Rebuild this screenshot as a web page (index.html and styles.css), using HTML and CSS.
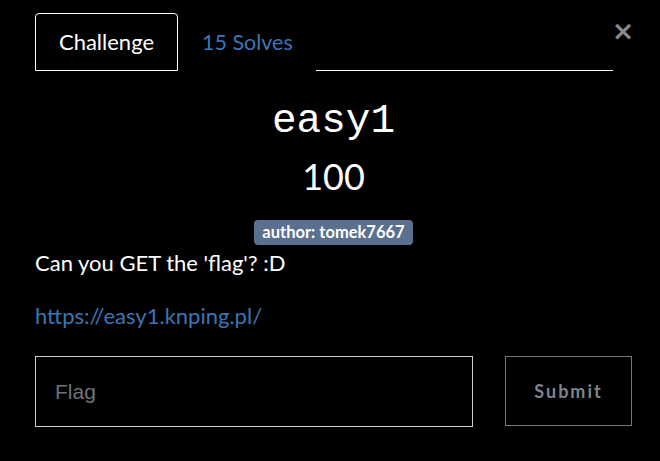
FILE: index.html
```html
<!DOCTYPE html>
<html>
<head>
<meta charset="utf-8">
<link rel="stylesheet" href="styles.css">
</head>
<body>
<div class="modal">
  <div class="header">
    <ul class="tabs">
      <li class="tab active">Challenge</li>
      <li class="tab"><a href="#">15 Solves</a></li>
    </ul>
    <div class="fill"></div>
    <button class="close">&times;</button>
  </div>
  <h2 class="title">easy1</h2>
  <h3 class="points">100</h3>
  <div class="tags"><span class="badge">author: tomek7667</span></div>
  <p class="desc">Can you GET the 'flag'? :D</p>
  <p class="link"><a href="#">https://easy1.knping.pl/</a></p>
  <form class="submit-row">
    <input class="flag" type="text" placeholder="Flag">
    <button class="submit" type="button">Submit</button>
  </form>
</div>
</body>
</html>
```
FILE: styles.css
```css
html, body {
  margin: 0;
  padding: 0;
  background: #000;
  color: #fff;
  font-family: Lato, "Open Sans", sans-serif;
}
.modal {
  padding: 13px 28px 0 35px;
}
.header {
  display: flex;
  align-items: flex-start;
}
.tabs {
  display: flex;
  list-style: none;
  margin: 0;
  padding: 0;
}
.tab {
  box-sizing: border-box;
  height: 58px;
  padding: 0 20px 0 23px;
  font-size: 21.5px;
  line-height: 56px;
  border: 1px solid transparent;
  border-radius: 4px 4px 0 0;
}
.tab.active {
  border-color: #fff;
  width: 143px;
  text-align: center;
  padding: 0;
  font-size: 22px;
}
.tab a {
  color: #3a76b6;
  text-decoration: none;
}
.fill {
  flex: 1;
  height: 57px;
  border-bottom: 1px solid #fff;
  margin-left: 2px;
}
.close {
  background: none;
  border: 0;
  padding: 0;
  margin: 4px 1px 0 2px;
  width: 16px;
  color: #8a8a8a;
  font-family: "DejaVu Sans", sans-serif;
  font-weight: bold;
  font-size: 27px;
  line-height: 28px;
  display: flex;
  justify-content: center;
}
.title {
  margin: 27px 0 0;
  text-align: center;
  font-family: "Liberation Mono", monospace;
  font-weight: normal;
  font-size: 41px;
  line-height: 46px;
}
.points {
  margin: 12px 0 0;
  text-align: center;
  font-weight: normal;
  font-size: 36px;
  line-height: 40px;
}
.tags {
  display: flex;
  justify-content: center;
  margin-top: 24px;
}
.badge {
  background: #5b6f8f;
  color: #fff;
  font-weight: bold;
  font-size: 16.5px;
  line-height: 25px;
  padding: 0 8px;
  border-radius: 4px;
}
.desc {
  margin: 4px 0 0;
  font-size: 22px;
  line-height: 28px;
}
.link {
  margin: 25px 0 0;
  font-size: 22px;
  line-height: 28px;
}
.link a {
  color: #3a76b6;
  text-decoration: none;
}
.submit-row {
  display: flex;
  align-items: flex-start;
  gap: 32px;
  margin-top: 26px;
}
.flag {
  box-sizing: border-box;
  width: 438px;
  height: 71px;
  background: #000;
  border: 1px solid #d0d0d0;
  color: #fff;
  padding: 0 19px;
  font-family: "Liberation Sans", Arial, sans-serif;
  font-size: 21px;
  outline: none;
}
.flag::placeholder {
  color: #6c757d;
}
.submit {
  box-sizing: border-box;
  width: 127px;
  height: 70px;
  background: #000;
  border: 1px solid #777;
  color: #7d858d;
  font-family: Lato, sans-serif;
  font-weight: bold;
  font-size: 18px;
  letter-spacing: 2px;
}
```
